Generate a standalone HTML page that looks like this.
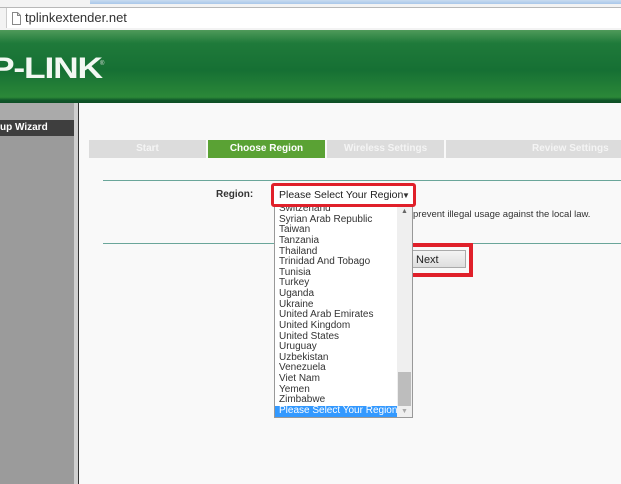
<!DOCTYPE html>
<html><head><meta charset="utf-8"><style>
*{margin:0;padding:0;box-sizing:border-box}
body{width:621px;height:484px;overflow:hidden;background:#f9f9f9;font-family:"Liberation Sans",Arial,sans-serif;position:relative}
.a{position:absolute;white-space:nowrap}
</style></head><body>
<div class="a" style="left:0;top:0;width:621px;height:31px;background:#f3f3f3"></div>
<div class="a" style="left:90px;top:0;width:531px;height:4px;background:linear-gradient(#c9dcf0,#a9c8ea)"></div>
<div class="a" style="left:0;top:7px;width:621px;height:1px;background:#b8b8b8"></div>
<div class="a" style="left:6px;top:8px;width:615px;height:20px;background:#fff;border-left:1px solid #ccc"></div>
<svg class="a" style="left:11px;top:12px" width="10" height="13"><path d="M1.5 .5h5l3 3v9h-8z M6.5 .5v3h3" fill="#fff" stroke="#888"/></svg>
<div class="a" style="left:25px;top:10px;font-size:13px;color:#333">tplinkextender.net</div>
<div class="a" style="left:0;top:30px;width:621px;height:73px;background:linear-gradient(#4f9a5a 0%,#1f7a3a 18%,#167034 55%,#2b8838 92%,#10582a 96%,#0e4d25 100%)"></div>
<div class="a" style="left:-9px;top:52px;font-size:30px;font-weight:bold;color:#f2f8f2;letter-spacing:-1px;transform:scaleX(1.18);transform-origin:left">P-LINK</div>
<div class="a" style="left:100px;top:61px;font-size:6px;color:#ddd">®</div>
<div class="a" style="left:0;top:103px;width:74px;height:381px;background:#9b9b9b"></div>
<div class="a" style="left:0;top:103px;width:74px;height:17px;background:#aaa"></div>
<div class="a" style="left:74px;top:103px;width:4px;height:381px;background:#cfcfcf"></div>
<div class="a" style="left:78px;top:103px;width:1px;height:381px;background:#333"></div>
<div class="a" style="left:0;top:120px;width:74px;height:16px;background:#3e3e3e;color:#fff;font-size:10px;font-weight:bold;padding:2px 0 0 0;line-height:12px">up Wizard</div>
<div class="a" style="left:89px;top:140px;width:117px;height:18px;background:#dcdcdc;color:#f4f4f4;font-size:10px;font-weight:bold;text-align:center;line-height:18px">Start</div>
<div class="a" style="left:208px;top:140px;width:117px;height:18px;background:#5aa234;color:#fff;font-size:10px;font-weight:bold;text-align:center;line-height:18px">Choose Region</div>
<div class="a" style="left:327px;top:140px;width:117px;height:18px;background:#dcdcdc;color:#f4f4f4;font-size:10px;font-weight:bold;text-align:center;line-height:18px">Wireless Settings</div>
<div class="a" style="left:446px;top:140px;width:175px;height:18px;background:#dcdcdc;color:#f4f4f4;font-size:10px;font-weight:bold;padding-left:86px;line-height:18px;overflow:hidden">Review Settings</div>
<div class="a" style="left:103px;top:180px;width:518px;height:1px;background:#6aa69a"></div>
<div class="a" style="left:103px;top:243px;width:518px;height:1px;background:#6aa69a"></div>
<div class="a" style="left:216px;top:189px;font-size:10px;font-weight:bold;color:#333">Region:</div>
<div class="a" style="left:413px;top:209px;font-size:9.5px;color:#333">prevent illegal usage against the local law.</div>
<div class="a" style="left:403px;top:243px;width:70px;height:34px;border:4px solid #e0202a"></div>
<div class="a" style="left:407px;top:250px;width:59px;height:18px;background:linear-gradient(#f4f4f4,#dedede);border:1px solid #aaa;font-size:11px;padding:3px 0 0 8px;color:#222">Next</div>
<div class="a" style="left:274px;top:204px;width:139px;height:214px;background:#fff;border:1px solid #999;overflow:hidden;font-size:10px;color:#333;line-height:10.63px">
<div style="position:absolute;left:4px;top:-1px;width:120px">Switzerland<br>Syrian Arab Republic<br>Taiwan<br>Tanzania<br>Thailand<br>Trinidad And Tobago<br>Tunisia<br>Turkey<br>Uganda<br>Ukraine<br>United Arab Emirates<br>United Kingdom<br>United States<br>Uruguay<br>Uzbekistan<br>Venezuela<br>Viet Nam<br>Yemen<br>Zimbabwe</div>
<div style="position:absolute;left:0;top:201px;width:122px;height:11px;background:#3399ff;color:#fff;padding-left:4px;white-space:nowrap;overflow:hidden">Please Select Your Region</div>
<div style="position:absolute;left:122px;top:0;width:15px;height:212px;background:#efefef"></div>
<div style="position:absolute;left:123px;top:167px;width:13px;height:34px;background:#bdbdbd"></div>
<div style="position:absolute;left:126px;top:2px;font-size:7px;color:#666">▲</div>
<div style="position:absolute;left:126px;top:202px;font-size:7px;color:#aaa">▼</div>
</div>
<div class="a" style="left:271px;top:183px;width:145px;height:24px;border:3px solid #e0202a;border-radius:3px;background:#fff"></div>
<div class="a" style="left:279px;top:189px;font-size:10.5px;color:#222">Please Select Your Region</div>
<div class="a" style="left:402px;top:191px;font-size:8px;color:#333">▼</div>
</body></html>
